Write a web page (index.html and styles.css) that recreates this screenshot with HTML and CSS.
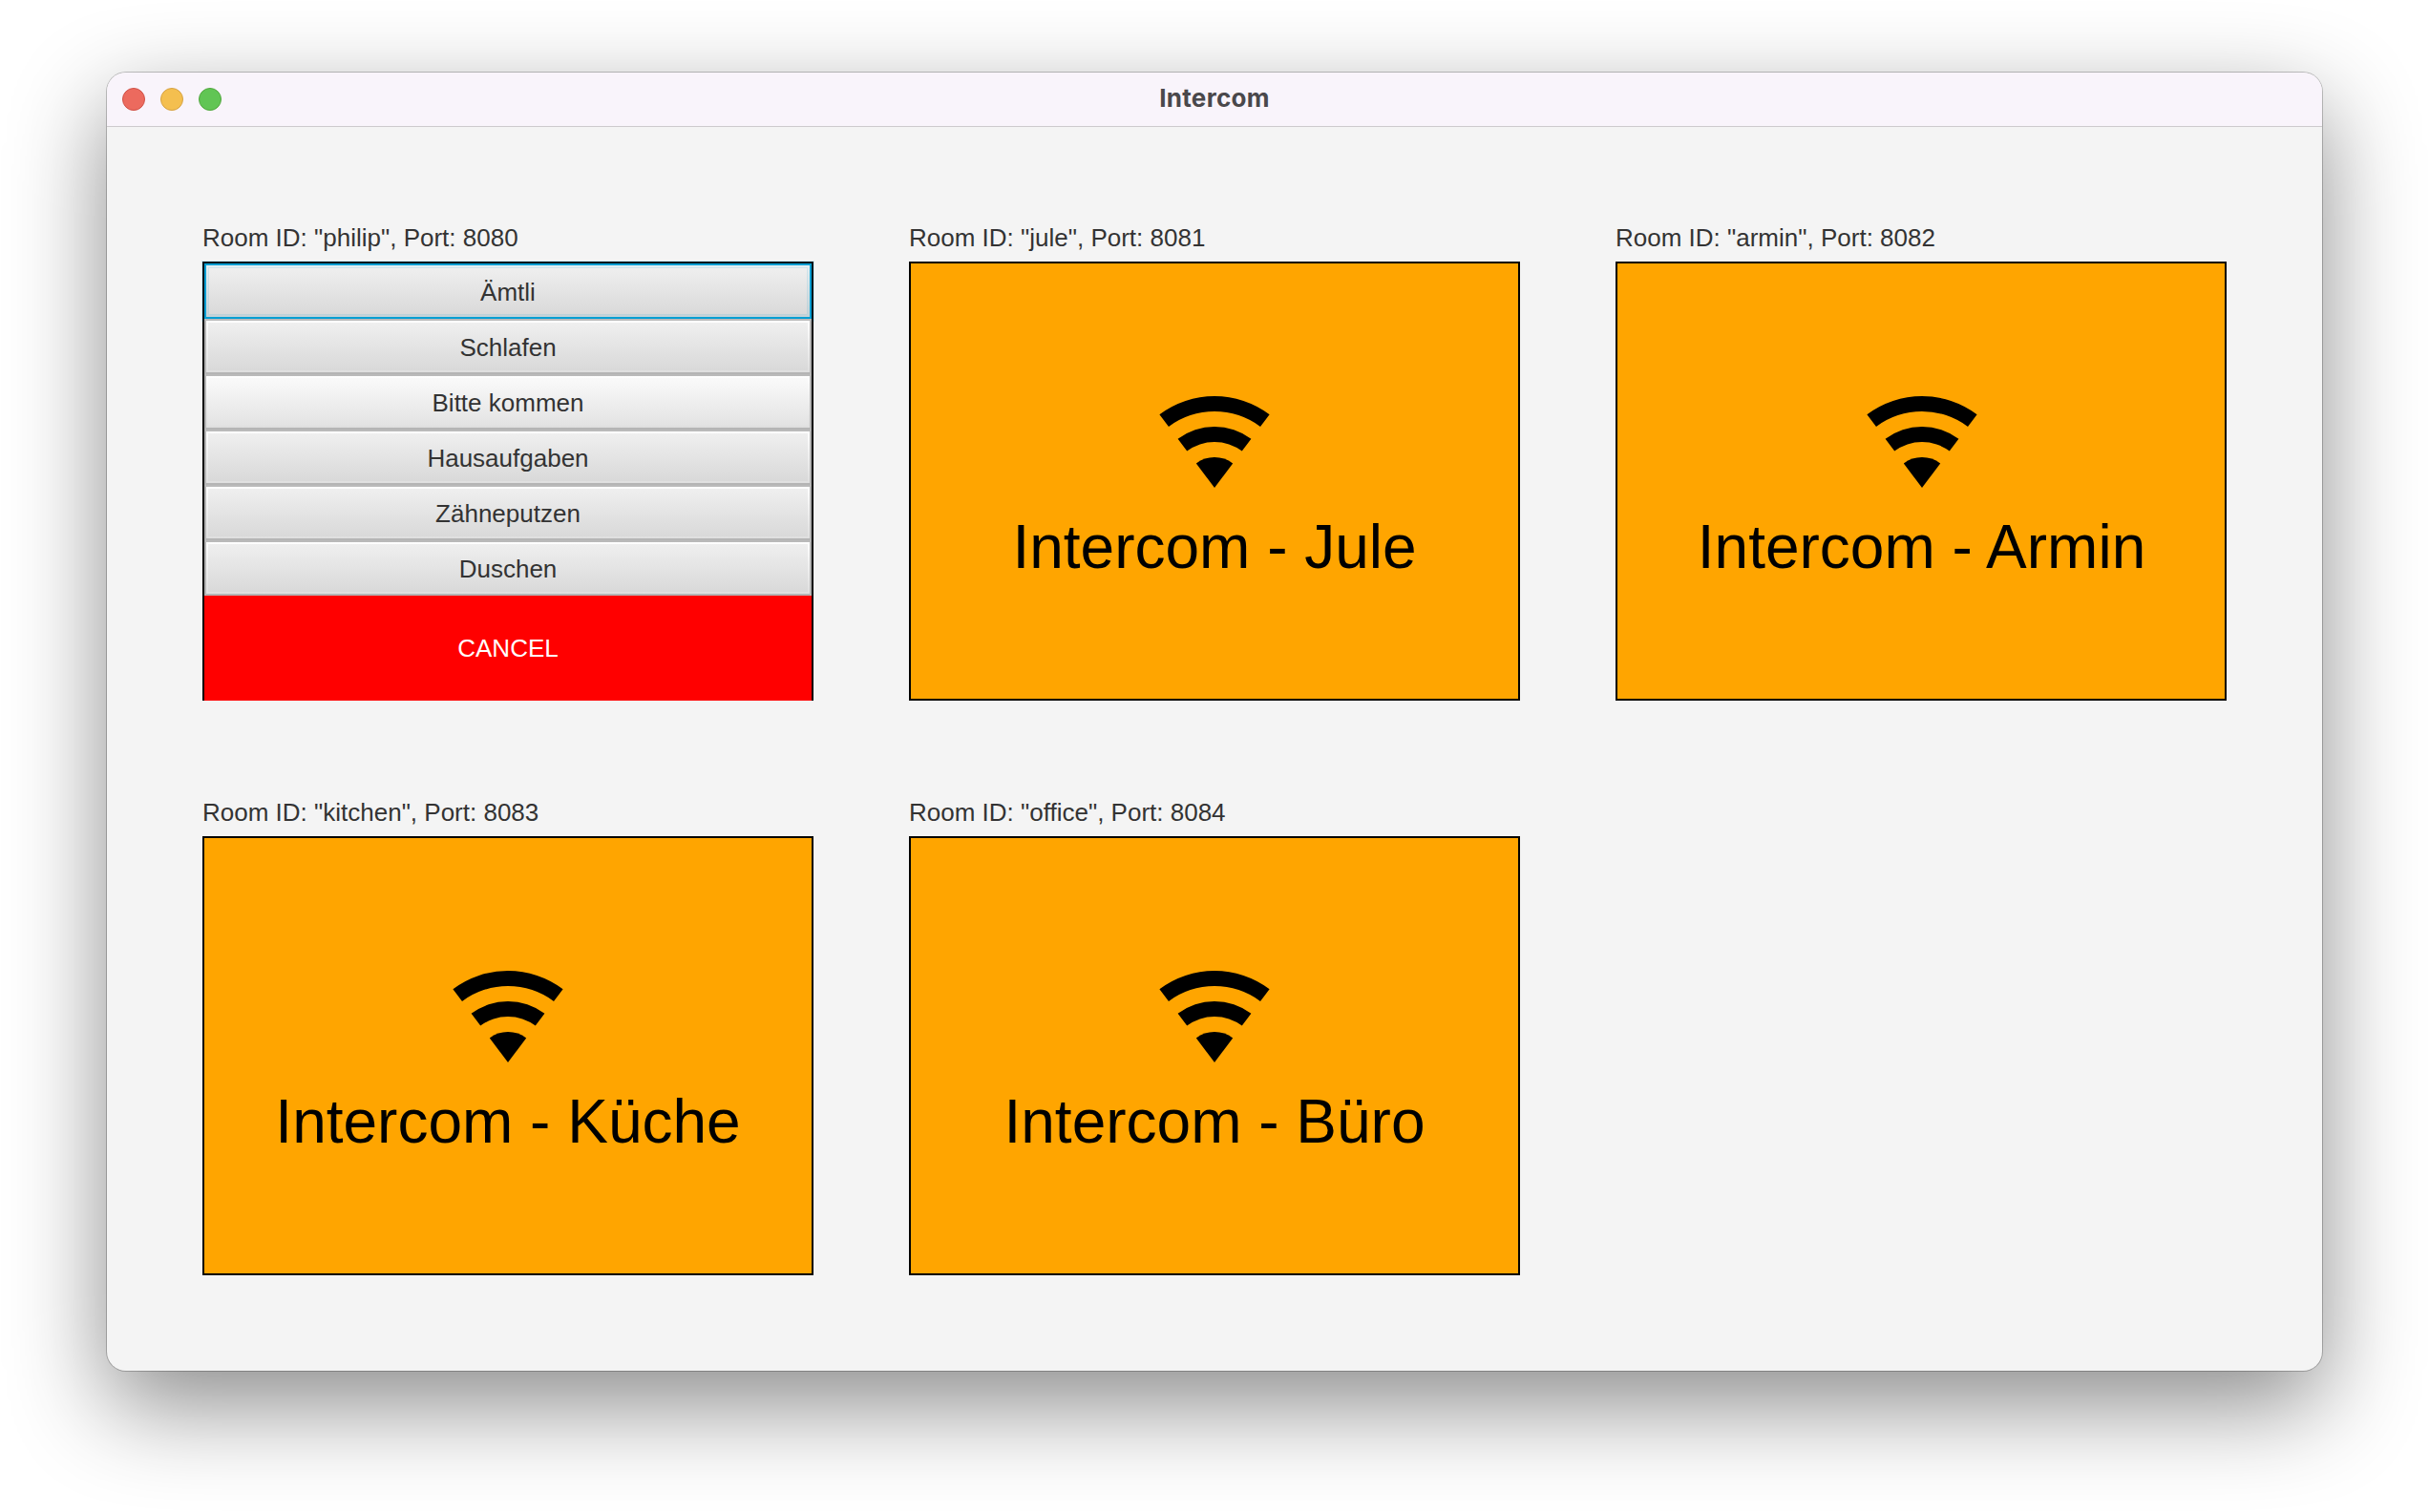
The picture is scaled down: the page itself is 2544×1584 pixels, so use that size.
FILE: index.html
```
<!DOCTYPE html>
<html lang="de">
<head>
<meta charset="utf-8">
<title>Intercom</title>
<link rel="stylesheet" href="styles.css">
</head>
<body>
<svg class="defs" width="0" height="0" aria-hidden="true">
  <symbol id="wifi" viewBox="0 0 116 96">
    <path d="M58 96L38.8 70.4A32 32 0 0 1 77.2 70.4Z"/>
    <path d="M19.6 44.8A64 64 0 0 1 96.4 44.8L86.8 57.6A48 48 0 0 0 29.2 57.6Z"/>
    <path d="M.4 19.2A96 96 0 0 1 115.6 19.2L106 32A80 80 0 0 0 10 32Z"/>
  </symbol>
</svg>
<div class="window">
  <header class="titlebar">
    <div class="lights"><span class="light close"></span><span class="light minimize"></span><span class="light zoom"></span></div>
    <h1 class="title">Intercom</h1>
  </header>
  <main class="rooms">
    <section class="room">
      <p class="label">Room ID: "philip", Port: 8080</p>
      <div class="screen menu">
        <button class="item focused"><span>Ämtli</span></button>
        <button class="item"><span>Schlafen</span></button>
        <button class="item hovered"><span>Bitte kommen</span></button>
        <button class="item"><span>Hausaufgaben</span></button>
        <button class="item"><span>Zähneputzen</span></button>
        <button class="item"><span>Duschen</span></button>
        <button class="cancel">CANCEL</button>
      </div>
    </section>
    <section class="room">
      <p class="label">Room ID: "jule", Port: 8081</p>
      <div class="screen idle"><svg class="wifi"><use href="#wifi"/></svg><p class="name">Intercom - Jule</p></div>
    </section>
    <section class="room">
      <p class="label">Room ID: "armin", Port: 8082</p>
      <div class="screen idle shifted"><svg class="wifi"><use href="#wifi"/></svg><p class="name">Intercom - Armin</p></div>
    </section>
    <section class="room">
      <p class="label">Room ID: "kitchen", Port: 8083</p>
      <div class="screen idle"><svg class="wifi"><use href="#wifi"/></svg><p class="name">Intercom - Küche</p></div>
    </section>
    <section class="room">
      <p class="label">Room ID: "office", Port: 8084</p>
      <div class="screen idle"><svg class="wifi"><use href="#wifi"/></svg><p class="name">Intercom - Büro</p></div>
    </section>
  </main>
</div>
</body>
</html>
```
FILE: styles.css
```
* { box-sizing: border-box; margin: 0; padding: 0; }

body {
  height: 1584px;
  padding: 76px 112px 0;
  background: #fff;
  font-family: "Liberation Sans", Arial, sans-serif;
  font-size: 26px;
  color: #333;
  overflow: hidden;
}

.defs { display: block; }

.window {
  width: 2320px;
  height: 1360px;
  border-radius: 20px;
  background: #f4f4f4;
  box-shadow: 0 0 0 1px rgba(0, 0, 0, .22), 0 36px 100px rgba(0, 0, 0, .46);
}

.titlebar {
  display: grid;
  grid-template-columns: 1fr auto 1fr;
  align-items: center;
  height: 57px;
  padding: 0 16px;
  border-bottom: 1px solid #cdcacd;
  border-radius: 20px 20px 0 0;
  background: #f9f4fb;
}

.lights { display: flex; gap: 16px; }
.light { width: 24px; height: 24px; border-radius: 50%; border: 1px solid; }
.close { background: #ec6a5e; border-color: #d05147; }
.minimize { background: #f4bf4f; border-color: #d6a243; }
.zoom { background: #61c554; border-color: #51a73e; }

.title {
  font: bold 26px/32px Inter, sans-serif;
  letter-spacing: .3px;
  padding-bottom: 2px;
  color: #4a484b;
}

.rooms {
  display: grid;
  grid-template-columns: repeat(3, 640px);
  gap: 100px;
  padding: 99px 100px;
}

.room { display: grid; grid-template-rows: 42px 460px; }
.label { line-height: 34px; }
.screen { border: 2px solid #000; display: flex; flex-direction: column; }

.menu { border-bottom: 0; }

.item, .cancel {
  font: inherit;
  color: #333;
  border: 0;
  display: flex;
  align-items: center;
  justify-content: center;
}

.item {
  height: 58px;
  border: 2px solid #b5b5b5;
  border-top-color: #bababa;
  background: linear-gradient(#fff, #dfdfdf);
  padding: 2px;
}

.item span {
  flex: 1;
  align-self: stretch;
  line-height: 52px;
  height: 50px;
  background: linear-gradient(#efefef, #d9d9d9);
}

.item.hovered span { background: linear-gradient(#fafafa, #e3e3e3); }

.item.focused {
  border-color: #039ed3;
  background: linear-gradient(#e3eff3, #c3d2d7);
  box-shadow: 0 0 0 3px rgba(3, 158, 211, .13);
}

.item.focused span { box-shadow: inset 0 0 0 1px rgba(3, 158, 211, .13); }

.cancel { height: 110px; background: #f00; color: #fff; }

.idle { align-items: center; background: #ffa500; color: #000; }
.shifted { padding-left: 1px; }
.wifi { width: 116px; height: 96px; margin-top: 139px; }
.name { font-size: 64px; line-height: 74px; margin-top: 25px; }
```
